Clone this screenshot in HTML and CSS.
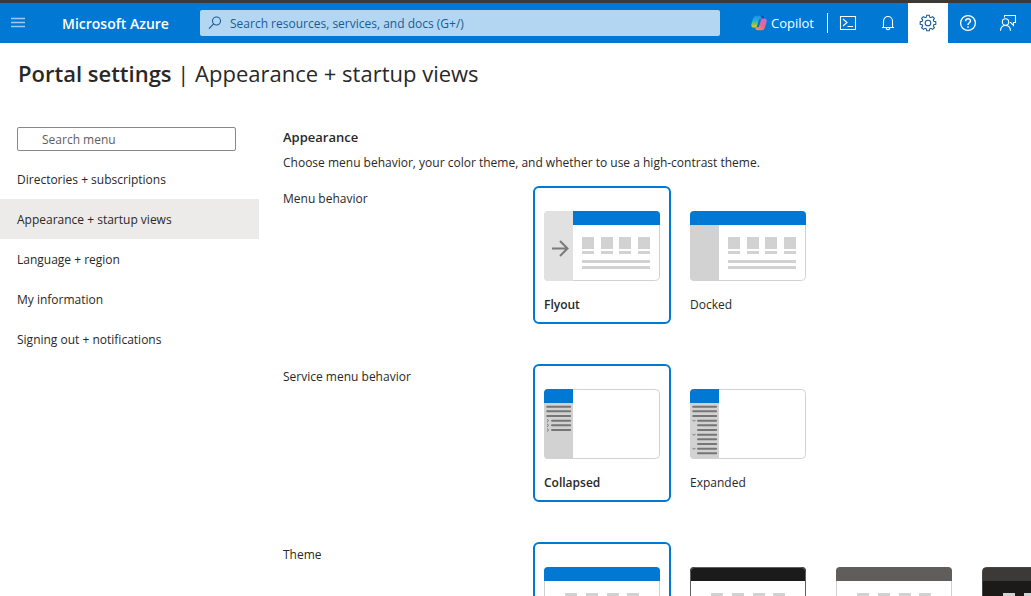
FILE: index.html
```
<!DOCTYPE html>
<html lang="en">
<head>
<meta charset="utf-8">
<title>Portal settings</title>
<link rel="stylesheet" href="styles.css">
</head>
<body>
<svg class="defs" aria-hidden="true">
  <defs>
    <g id="tiles-narrow">
      <path d="M38 26h12v12H38zM57 26h12v12H57zM75 26h12v12H75zM94 26h12v12H94zM38 40h12v3H38zM57 40h12v3H57zM75 40h12v3H75zM94 40h12v3H94zM38 49h68v3H38zM38 55h68v3H38z"/>
    </g>
    <g id="tiles-wide">
      <path d="M21 26h12v12H21zM42 26h12v12H42zM63 26h12v12H63zM83 26h12v12H83zM21 40h12v3H21zM42 40h12v3H42zM63 40h12v3H63zM83 40h12v3H83zM21 49h74v3H21zM21 55h74v3H21z"/>
    </g>
    <linearGradient id="cool" x1="0" y1="0" x2="0" y2="1"><stop offset="0" stop-color="#1f8df0"/><stop offset=".45" stop-color="#28b5c8"/><stop offset=".75" stop-color="#8fc843"/><stop offset="1" stop-color="#f5c518"/></linearGradient>
    <linearGradient id="warm" x1="1" y1="0" x2="0" y2="1"><stop offset="0" stop-color="#b56ff2"/><stop offset=".5" stop-color="#f0628b"/><stop offset="1" stop-color="#ff9a52"/></linearGradient>
  </defs>
</svg>

<header class="topbar">
  <button class="menu-button" type="button" aria-label="Show portal menu">
    <svg width="14" height="12" viewBox="0 0 14 12"><path d="M0 1.500h14M0 5.500h14M0 9.500h14" stroke="currentColor" stroke-width="1.400"/></svg>
  </button>
  <a class="brand" href="#">Microsoft Azure</a>
  <label class="global-search">
    <svg width="14" height="14" viewBox="0 0 14 14" fill="none" stroke="currentColor" stroke-width="1.100"><circle cx="8.500" cy="5" r="4"/><path d="M5.600 7.900 1 12.600"/></svg>
    <input type="text" aria-label="Search" placeholder="Search resources, services, and docs (G+/)">
  </label>
  <button class="copilot" type="button">
    <svg width="16" height="16" viewBox="0 0 16 16"><path d="M11.500 2.600C11.200 1.500 10.500.8 9.300.8H5C3.600.8 2.800 1.800 2.300 3.100L.7 8C-.2 10.900.4 12.600 2.600 12.600H4c1.100 0 1.700-.6 2-1.600L7.700 5.200c.3-1 .8-1.500 1.700-1.500h2.400z" fill="url(#cool)"/><path d="M10.300.8H8.600c1.200 0 1.700.9 2 2l.5 1.700h2.300l-.6-1.900C12.500 1.500 11.700.8 10.300.8z" fill="#1744a8"/><path d="M4.500 13.400c.3 1.100 1 1.800 2.200 1.800H11c1.400 0 2.200-1 2.700-2.300L15.300 8c.9-2.900.3-4.600-1.900-4.600H12c-1.100 0-1.700.6-2 1.600l-1.700 5.800c-.3 1-.8 1.500-1.700 1.500H4.200z" fill="url(#warm)"/></svg>
    <span>Copilot</span>
  </button>
  <nav class="tools" aria-label="Tools">
    <button class="tool" type="button" aria-label="Cloud Shell"><svg width="18" height="18" viewBox="0 0 18 18"><path d="M1.500 2.500h15v13h-15zM4 5l4 3.500L4 12M8.500 12.500H14"/></svg></button>
    <button class="tool" type="button" aria-label="Notifications"><svg width="18" height="18" viewBox="0 0 18 18"><path d="M4.500 13.500V7a4.500 4.500 0 0 1 9 0v6.500M3 13.500h12M7.300 14c0 2.200 3.400 2.200 3.400 0"/></svg></button>
    <button class="tool tool-active" type="button" aria-label="Settings"><svg width="18" height="18" viewBox="0 0 18 18"><path d="m7.700 1.200 2.600 0 .4 2 1.200.5 1.700-1.100 1.800 1.800-1.100 1.700.5 1.200 2 .4v2.600l-2 .4-.5 1.200 1.100 1.700-1.800 1.800-1.700-1.100-1.200.5-.4 2H7.700l-.4-2-1.200-.5-1.700 1.100-1.800-1.800 1.100-1.700-.5-1.200-2-.4V7.700l2-.4.5-1.200-1.100-1.700 1.800-1.800 1.700 1.100 1.200-.5z"/><circle cx="9" cy="9" r="2.800"/></svg></button>
    <button class="tool" type="button" aria-label="Help"><svg width="18" height="18" viewBox="0 0 18 18"><circle cx="9" cy="9" r="7.400" stroke-width="1.300"/><path stroke-width="1.500" d="M6.600 7.200c0-3.300 4.900-3.200 4.900-.3 0 1.900-2.500 1.900-2.500 4M9 12.300v1.500"/></svg></button>
    <button class="tool" type="button" aria-label="Feedback"><svg width="18" height="18" viewBox="0 0 18 18"><circle cx="6.500" cy="8" r="3.200"/><path d="M1.500 16.800c.3-7 9.700-7 10 0M5.500 3.500v-2h11v7h-2v2.800l-2.800-2.800h-.9"/></svg></button>
  </nav>
</header>

<h1 class="page-title"><strong>Portal settings</strong> | Appearance + startup views</h1>

<div class="workspace">
  <aside class="sidebar">
    <input class="menu-search" type="text" aria-label="Search menu" placeholder="Search menu">
    <nav class="menu">
      <a href="#">Directories + subscriptions</a>
      <a class="current" href="#" aria-current="page">Appearance + startup views</a>
      <a href="#">Language + region</a>
      <a href="#">My information</a>
      <a href="#">Signing out + notifications</a>
    </nav>
  </aside>

  <main class="content">
    <h2>Appearance</h2>
    <p class="intro">Choose menu behavior, your color theme, and whether to use a high-contrast theme.</p>

    <div class="setting" role="radiogroup" aria-labelledby="menu-label">
      <div class="setting-name" id="menu-label">Menu behavior</div>
      <div class="options">
        <label class="option"><input type="radio" name="menu" checked>
          <svg class="thumb" viewBox="0 0 116 70"><rect class="frame" x=".5" y=".5" width="115" height="69" rx="4"/><path class="azure" d="M29 0h83a4 4 0 0 1 4 4v10H29z"/><path fill="#e1e1e1" d="M4 0h25v70H4a4 4 0 0 1-4-4V4a4 4 0 0 1 4-4z"/><use href="#tiles-narrow"/><path d="M8 37.500h15.500M16 30l7.500 7.500L16 45" fill="none" stroke="#7a7a7a" stroke-width="2"/></svg>
          <span>Flyout</span></label>
        <label class="option"><input type="radio" name="menu">
          <svg class="thumb" viewBox="0 0 116 70"><rect class="frame" x=".5" y=".5" width="115" height="69" rx="4"/><path class="rail" d="M0 14h29v56H4a4 4 0 0 1-4-4z"/><path class="azure" d="M4 0h108a4 4 0 0 1 4 4v10H0V4a4 4 0 0 1 4-4z"/><use href="#tiles-narrow"/></svg>
          <span>Docked</span></label>
      </div>
    </div>

    <div class="setting" role="radiogroup" aria-labelledby="service-label">
      <div class="setting-name" id="service-label">Service menu behavior</div>
      <div class="options">
        <label class="option"><input type="radio" name="service" checked>
          <svg class="thumb" viewBox="0 0 116 70"><rect class="frame" x=".5" y=".5" width="115" height="69" rx="4"/><path class="rail" d="M0 14h29v56H4a4 4 0 0 1-4-4z"/><path class="azure" d="M4 0h25v14H0V4a4 4 0 0 1 4-4z"/><path class="lines" d="M3.200 17.700h23M3.200 22.300h23M3.200 27h23M8 31.700h18.200M8 36.300h18.200M8 41h18.200"/><path class="chevrons" d="m3 30.200 1.600 1.500L3 33.200M3 34.800l1.600 1.500L3 37.800M3 39.500 4.600 41 3 42.500"/></svg>
          <span>Collapsed</span></label>
        <label class="option"><input type="radio" name="service">
          <svg class="thumb" viewBox="0 0 116 70"><rect class="frame" x=".5" y=".5" width="115" height="69" rx="4"/><path class="rail" d="M0 14h29v56H4a4 4 0 0 1-4-4z"/><path class="azure" d="M4 0h25v14H0V4a4 4 0 0 1 4-4z"/><path class="lines" d="M3.200 17.700h23M3.200 22.300h23M3.200 27h23M8 31.700h18.200M8 36.300h18.200M8 41h18.200M8 45.700h18.200M8 50.300h18.200M8 55h18.200M8 59.700h18.200M8 64.300h18.200"/><path class="chevrons" d="m2.500 30.900 1.500 1.500 1.500-1.500M2.500 44.900 4 46.400l1.500-1.500M2.500 58.900 4 60.400l1.500-1.500"/></svg>
          <span>Expanded</span></label>
      </div>
    </div>

    <div class="setting" role="radiogroup" aria-labelledby="theme-label">
      <div class="setting-name" id="theme-label">Theme</div>
      <div class="options">
        <label class="option"><input type="radio" name="theme" aria-label="Azure" checked>
          <svg class="thumb" viewBox="0 0 116 70"><rect class="frame" x=".5" y=".5" width="115" height="69" rx="4"/><path class="azure" d="M4 0h108a4 4 0 0 1 4 4v10H0V4a4 4 0 0 1 4-4z"/><use href="#tiles-wide"/></svg></label>
        <label class="option"><input type="radio" name="theme" aria-label="Blue">
          <svg class="thumb" viewBox="0 0 116 70"><path fill="#1b1b1b" d="M4 0h108a4 4 0 0 1 4 4v10H0V4a4 4 0 0 1 4-4z"/><rect x=".5" y=".5" width="115" height="69" rx="4" fill="none" stroke="#605e5c"/><use href="#tiles-wide"/></svg></label>
        <label class="option"><input type="radio" name="theme" aria-label="Light">
          <svg class="thumb" viewBox="0 0 116 70"><rect class="frame" x=".5" y=".5" width="115" height="69" rx="4"/><path fill="#5f5e5c" d="M4 0h108a4 4 0 0 1 4 4v10H0V4a4 4 0 0 1 4-4z"/><use href="#tiles-wide"/></svg></label>
        <label class="option"><input type="radio" name="theme" aria-label="Dark">
          <svg class="thumb" viewBox="0 0 116 70"><rect x=".5" y=".5" width="115" height="69" rx="4" fill="#1b1a19" stroke="#484644"/><path fill="#3b3a39" d="M4 1h108a3 3 0 0 1 3 3v10H1V4a3 3 0 0 1 3-3z"/><use href="#tiles-wide"/></svg></label>
      </div>
    </div>
  </main>
</div>
</body>
</html>
```
FILE: styles.css
```
* { box-sizing: border-box; }
body {
  margin: 0;
  height: 100vh;
  overflow: hidden;
  background: #fff;
  color: #292827;
  font: 12px/20px "Segoe UI", "Open Sans", "Noto Sans", sans-serif;
}
button, input { font: inherit; color: inherit; }
button { border: 0; padding: 0; background: none; }
a { color: inherit; text-decoration: none; }
.defs { position: absolute; width: 0; height: 0; }

.topbar {
  display: flex;
  align-items: center;
  height: 43px;
  padding-right: 3px;
  border-top: 3px solid #3b3a39;
  background: #0078d4;
  color: #fff;
}
.menu-button { display: grid; place-items: center; width: 36px; height: 40px; color: #9bcbf0; }
.brand { width: 164px; padding: 2px 0 0 26px; font-size: 14px; font-weight: 600; white-space: nowrap; }
.global-search {
  display: flex;
  flex: 1;
  align-items: center;
  gap: 8px;
  height: 26px;
  padding: 0 8px;
  border-radius: 2px;
  background: #b3d7f2;
  color: #1b5a92;
}
.global-search input { flex: 1; min-width: 0; padding: 2px 0 0; border: 0; background: none; outline: 0; }
.global-search input::placeholder { color: #1b5a92; opacity: 1; }
.copilot {
  display: flex;
  align-items: center;
  gap: 4px;
  width: 108px;
  height: 20px;
  padding-left: 31px;
  border-right: 1px solid #fff;
  font-size: 13px;
}
.tools { display: flex; }
.tool { display: grid; place-items: center; width: 40px; height: 40px; }
.tool svg { fill: none; stroke: currentColor; stroke-width: 1.1; }
.tool-active { background: #fff; color: #1b5a92; }

.page-title { margin: 0; padding: 14px 18px 0; font-size: 22px; line-height: 32px; font-weight: 400; }
.page-title strong { font-weight: 600; }

.workspace { display: flex; align-items: flex-start; gap: 24px; padding-top: 38px; }
.sidebar { flex: none; width: 259px; }
.menu-search {
  display: block;
  width: 219px;
  height: 24px;
  margin: 0 0 8px 17px;
  padding: 0 24px;
  border: 1px solid #8a8886;
  border-radius: 2px;
}
.menu-search::placeholder { color: #605e5c; opacity: 1; }
.menu a { display: block; padding: 11px 17px 9px; }
.menu .current { background: #edebe9; }

.content { flex: 1; min-width: 0; }
h2 { margin: 0; font-size: 13px; line-height: 20px; font-weight: 600; }
.intro { margin: 6px 0 13px; }
.setting { display: flex; margin-bottom: 40px; }
.setting-name { flex: none; width: 250px; padding-top: 3px; }
.options { display: flex; gap: 8px; }
.option {
  position: relative;
  display: flex;
  flex: none;
  flex-direction: column;
  gap: 14px;
  width: 138px;
  height: 138px;
  padding: 23px 9px 0;
  border: 2px solid transparent;
  border-radius: 6px;
}
.option input { position: absolute; opacity: 0; margin: 0; }
.option:has(:checked) { border-color: #0078d4; font-weight: 600; }
.thumb { display: block; width: 116px; height: 70px; fill: #d2d2d2; }
.frame { fill: #fff; stroke: #d2d2d2; }
.azure { fill: #0078d4; }
.rail { fill: #d2d2d2; }
.lines { fill: none; stroke: #767676; stroke-width: 2; stroke-linecap: round; }
.chevrons { fill: none; stroke: #767676; stroke-width: 1; }
```
